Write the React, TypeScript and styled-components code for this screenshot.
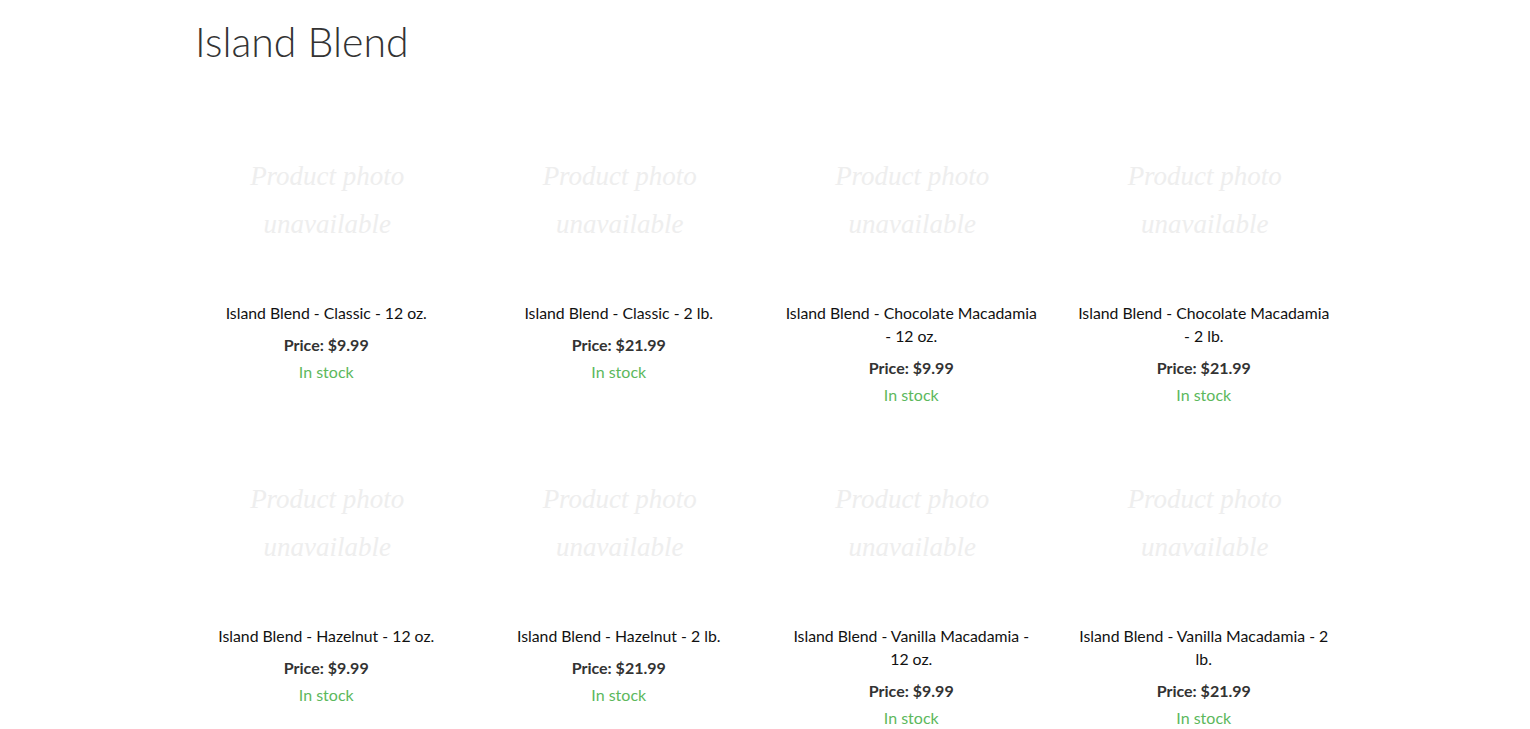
import React from "react";
import styled, { createGlobalStyle } from "styled-components";

const Global = createGlobalStyle`
  html, body { margin: 0; padding: 0; background: #fff; }
  body { font-family: Lato, "Open Sans", sans-serif; color: #111; }
`;

const Container = styled.div`
  width: 1170px;
  margin: 0 auto;
`;

const Title = styled.h1`
  margin: 0;
  padding: 19px 15px 0;
  font-family: Lato, sans-serif;
  font-weight: 300;
  font-size: 41px;
  line-height: 46px;
  color: #333;
`;

const Grid = styled.div`
  display: grid;
  grid-template-columns: repeat(4, 1fr);
  row-gap: 42px;
  margin-top: 60px;
`;

const Card = styled.div`
  padding: 0 15px;
  display: flex;
  flex-direction: column;
  align-items: center;
  text-align: center;
`;

const Photo = styled.div`
  height: 150px;
  width: 100%;
  display: flex;
  align-items: center;
  justify-content: center;
  font-family: "Liberation Serif", serif;
  font-style: italic;
  font-size: 27px;
  line-height: 48px;
  color: #eeeeee;
  padding-left: 2px;
  box-sizing: border-box;
`;

const Name = styled.div`
  margin-top: 26px;
  padding: 0 5px;
  font-size: 15.8px;
  line-height: 23px;
  color: #111;
`;

const Price = styled.div`
  margin-top: 10px;
  font-size: 16px;
  line-height: 22px;
  font-weight: 700;
  color: #333;
`;

const Stock = styled.div`
  margin-top: 5px;
  font-size: 16px;
  line-height: 22px;
  color: #5cb85c;
`;

const products = [
  { name: "Island Blend - Classic - 12 oz.", price: "$9.99" },
  { name: "Island Blend - Classic - 2 lb.", price: "$21.99" },
  { name: "Island Blend - Chocolate Macadamia - 12 oz.", price: "$9.99" },
  { name: "Island Blend - Chocolate Macadamia - 2 lb.", price: "$21.99" },
  { name: "Island Blend - Hazelnut - 12 oz.", price: "$9.99" },
  { name: "Island Blend - Hazelnut - 2 lb.", price: "$21.99" },
  { name: "Island Blend - Vanilla Macadamia - 12 oz.", price: "$9.99" },
  { name: "Island Blend - Vanilla Macadamia - 2 lb.", price: "$21.99" },
];

export default function App() {
  return (
    <>
      <Global />
      <Container>
        <Title>Island Blend</Title>
        <Grid>
          {products.map((p) => (
            <Card key={p.name}>
              <Photo>
                Product photo
                <br />
                unavailable
              </Photo>
              <Name>{p.name}</Name>
              <Price>Price: {p.price}</Price>
              <Stock>In stock</Stock>
            </Card>
          ))}
        </Grid>
      </Container>
    </>
  );
}
